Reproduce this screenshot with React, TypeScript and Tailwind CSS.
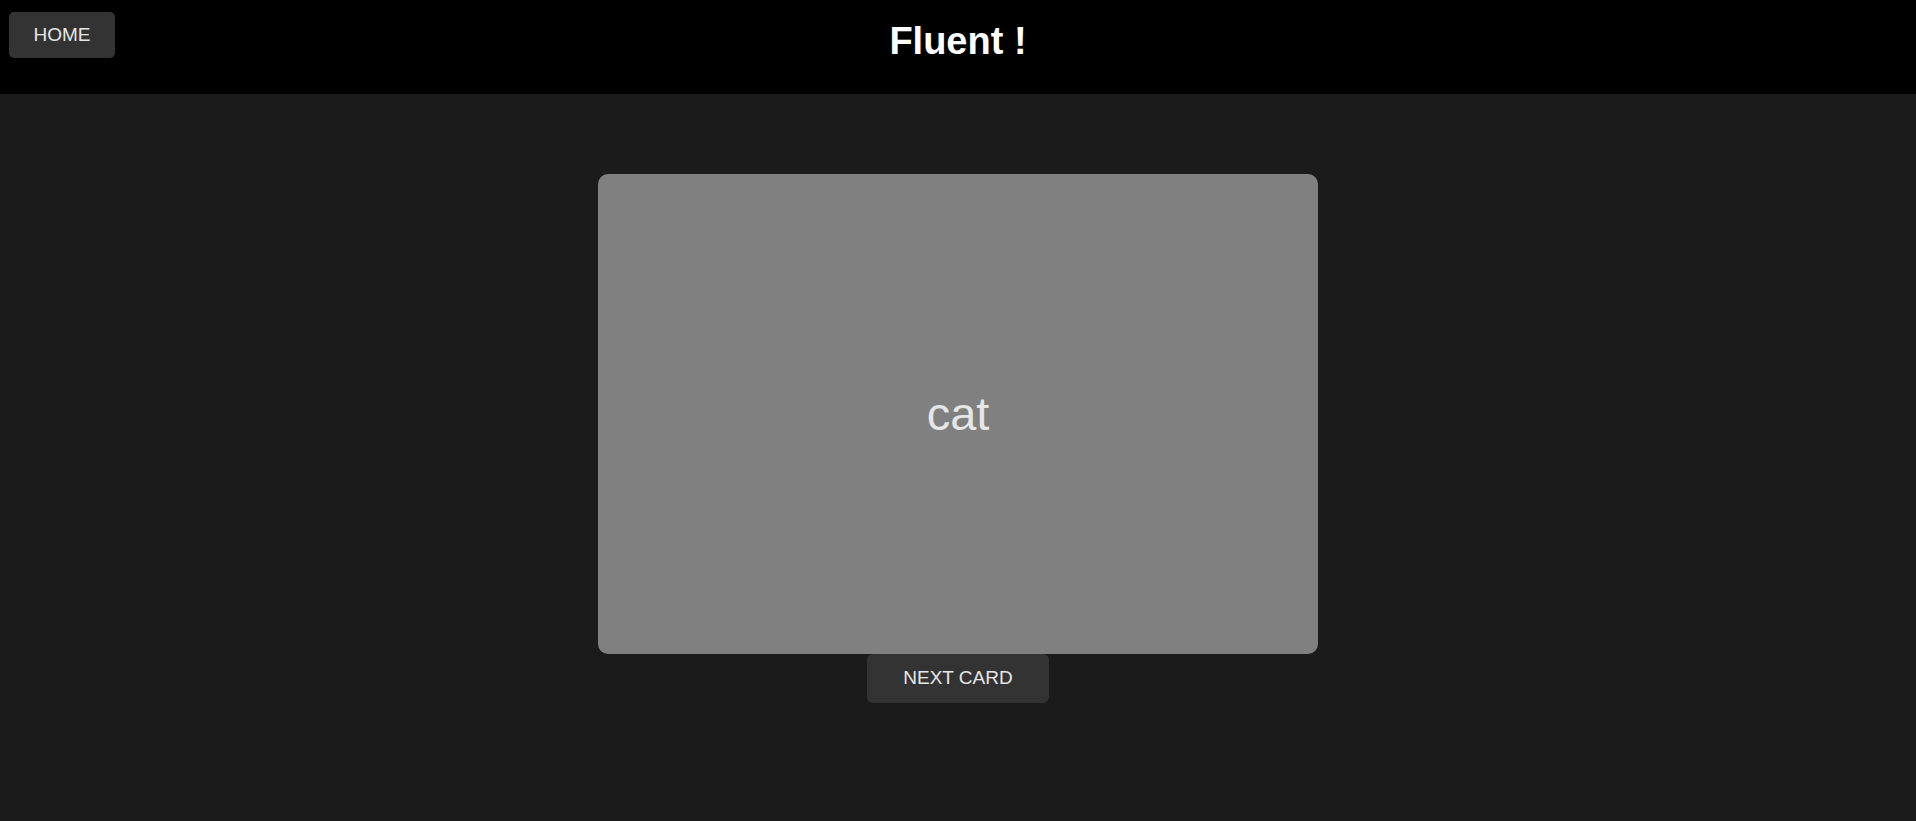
export default function App() {
  return (
    <div className="min-h-screen bg-[#1b1b1b] font-['Liberation_Sans',Arial,sans-serif]">
      {/* Header */}
      <header className="grid h-[94px] grid-cols-[1fr_auto_1fr] bg-black">
        <div className="pl-[9px] pt-[12px]">
          <button className="flex h-[46px] w-[106px] items-center justify-center rounded-[5px] bg-[#333333] text-[19px] text-[#e6e6e6]">
            HOME
          </button>
        </div>
        <h1 className="pt-[22px] text-[38px] font-bold leading-none text-white">Fluent !</h1>
        <div />
      </header>

      {/* Flashcard */}
      <main className="flex flex-col items-center pt-[80px]">
        <div className="flex h-[480px] w-[720px] items-center justify-center rounded-[10px] bg-[#808080]">
          <span className="pb-[2px] text-[47px] leading-none text-[#e6e6e6]">cat</span>
        </div>
        <button className="flex h-[49px] w-[182px] items-center justify-center rounded-[6px] bg-[#333333] text-[19px] text-[#e6e6e6]">
          NEXT CARD
        </button>
      </main>
    </div>
  )
}
